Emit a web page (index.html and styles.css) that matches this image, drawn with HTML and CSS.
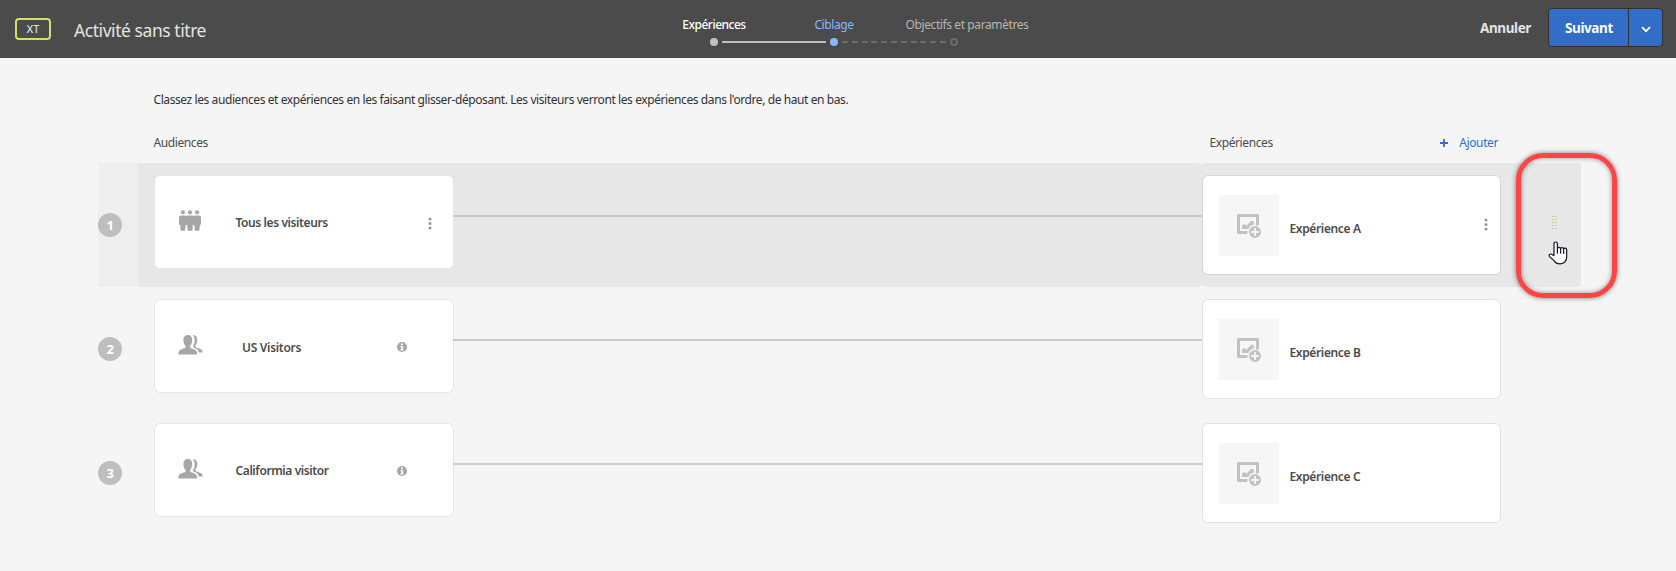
FILE: index.html
```html
<!DOCTYPE html>
<html lang="fr">
<head>
<meta charset="utf-8">
<title>Activité sans titre</title>
<link rel="stylesheet" href="styles.css">
</head>
<body>
<svg class="defs" width="0" height="0">
  <symbol id="crowd" viewBox="0 0 22 21">
    <circle cx="3.900" cy="2.300" r="2.100"/><circle cx="11" cy="2.300" r="2.100"/><circle cx="18.100" cy="2.300" r="2.100"/>
    <path d="M2 5.400H6L7.400 6 8.800 5.400H13.200L14.600 6 16 5.400H20Q22 5.400 22 7.400V13.500Q22 15 20.900 15L20.300 20.800H16L15.300 15H13.900L13.300 20.800H8.700L8.100 15H6.700L6 20.800H1.700L1.100 15Q0 15 0 13.500V7.400Q0 5.400 2 5.400Z"/>
  </symbol>
  <symbol id="people" viewBox="0 0 25 20">
    <path d="M9.800 0c2.900 0 4.400 2 4.400 5 0 2.600-.9 4.600-2 5.700-.5 1.800.2 2.300 1.800 2.900 3.700 1.200 5.200 2 5.200 5.900H.4c0-3.900 1.500-4.700 5.200-5.900 1.600-.6 2.300-1.100 1.800-2.900-1.100-1.100-2-3.100-2-5.700 0-3 1.500-5 4.400-5z"/>
    <path d="M14.600.2c3.200-.5 4.700 1.600 4.700 4.800 0 2.300-.7 4-1.800 5.100-.4 1.600.2 2.100 1.900 2.700 3.700 1.300 5.300 2 5.300 4.800h-3.800c-.7-2.800-2.200-3.900-5.600-5l-.2-1.800c1-1.200 1.600-3.500 1.600-5.900 0-2.100-.9-3.700-2.100-4.700z"/>
  </symbol>
  <symbol id="info" viewBox="0 0 10 10">
    <circle cx="5" cy="5" r="5"/><path fill="#fff" d="M4 1.500h2v1.600H4zM3.400 4h2.500v3.400h.7v1H3.400v-1h.8V5h-.8z"/>
  </symbol>
  <symbol id="more" viewBox="0 0 4 13">
    <circle cx="2" cy="2" r="1.500"/><circle cx="2" cy="6.500" r="1.500"/><circle cx="2" cy="11" r="1.500"/>
  </symbol>
  <symbol id="picture" viewBox="0 0 24 24">
    <path d="M1 0h20q1 0 1 1v10.500h-3V3H3v14h7.500v3H1q-1 0-1-1V1q0-1 1-1z"/>
    <path d="M5 15V11.500Q7.500 9 9.500 11.800L13.500 7.500Q15.500 5.500 16.500 7.500L17.200 10.500Q12.500 11 11.500 15Z"/>
    <path fill-rule="evenodd" d="M18 12a6 6 0 1 1 0 12 6 6 0 0 1 0-12zm-1 2.200V17h-2.800v2H17v2.800h2V19h2.800v-2H19v-2.800z"/>
  </symbol>
</svg>

<header class="topbar">
  <span class="type-badge">XT</span>
  <h1 class="title">Activité sans titre</h1>
  <ol class="steps">
    <li class="step step-done"><span>Expériences</span><i class="dot"></i></li>
    <li class="step step-current"><span>Ciblage</span><i class="dot"></i></li>
    <li class="step step-next"><span>Objectifs et paramètres</span><i class="dot"></i></li>
  </ol>
  <div class="actions">
    <span class="cancel">Annuler</span>
    <div class="split">
      <span class="split-main">Suivant</span>
      <span class="split-menu"><svg width="10" height="7" viewBox="0 0 10 7"><path d="M1 1.200l4 4 4-4" fill="none" stroke="#fff" stroke-width="1.700"/></svg></span>
    </div>
  </div>
</header>

<main class="main">
  <p class="intro">Classez les audiences et expériences en les faisant glisser-déposant. Les visiteurs verront les expériences dans l'ordre, de haut en bas.</p>
  <div class="heads">
    <span>Audiences</span>
    <span>Expériences</span>
    <span class="add"><svg width="8" height="8" viewBox="0 0 8 8"><path d="M4 0v8M0 4h8" stroke="#326ec8" stroke-width="1.800"/></svg>Ajouter</span>
  </div>

  <section class="row row-active">
    <div class="rank"><b>1</b></div>
    <div class="lane">
      <div class="card audience">
        <svg class="aud-icon crowd"><use href="#crowd"/></svg>
        <span class="name">Tous les visiteurs</span>
        <svg class="more"><use href="#more"/></svg>
      </div>
      <div class="link"></div>
    </div>
    <div class="target">
      <div class="card experience">
        <div class="thumb"><svg width="24" height="24"><use href="#picture"/></svg></div>
        <span class="exp-name">Expérience A</span>
        <svg class="more"><use href="#more"/></svg>
      </div>
      <div class="grip"><i></i><i></i></div>
    </div>
  </section>

  <section class="row">
    <div class="rank"><b>2</b></div>
    <div class="lane">
      <div class="card audience">
        <svg class="aud-icon"><use href="#people"/></svg>
        <span class="name name-indent">US Visitors</span>
        <svg class="info"><use href="#info"/></svg>
      </div>
      <div class="link"></div>
    </div>
    <div class="target">
      <div class="card experience">
        <div class="thumb"><svg width="24" height="24"><use href="#picture"/></svg></div>
        <span class="exp-name">Expérience B</span>
      </div>
    </div>
  </section>

  <section class="row">
    <div class="rank"><b>3</b></div>
    <div class="lane">
      <div class="card audience">
        <svg class="aud-icon"><use href="#people"/></svg>
        <span class="name">Califormia visitor</span>
        <svg class="info"><use href="#info"/></svg>
      </div>
      <div class="link"></div>
    </div>
    <div class="target">
      <div class="card experience">
        <div class="thumb"><svg width="24" height="24"><use href="#picture"/></svg></div>
        <span class="exp-name">Expérience C</span>
      </div>
    </div>
  </section>
</main>

<div class="callout"></div>
<svg class="cursor" width="20" height="26" viewBox="0 0 20 26"><path d="M6 14.500V3q0-2 1.700-2t1.700 2v4.500q0-1.100 1.500-1.100 1.600 0 1.700 1.300 0-1.100 1.500-1.100t1.600 1.500q.2-1 1.300-1 1.700 0 1.700 2v6.300q0 6.900-6.700 7.400-4.200 0-6-3.200L1.600 15.600q-.9-1.700.2-2.300 1.200-.7 2.400.3zM9.400 7.500v4.700M12.600 8v4.200M15.700 8.500v3.900" fill="#fff" stroke="#15152b" stroke-width="1.200" stroke-linejoin="round" stroke-linecap="round"/></svg>
</body>
</html>
```
FILE: styles.css
```css
* { box-sizing: border-box; }

body {
  margin: 0;
  height: 571px;
  overflow: hidden;
  background: #f5f5f5;
  color: #4b4b4b;
  font: 12px/18px "Noto Sans", "Open Sans", sans-serif;
  letter-spacing: -.4px;
  position: relative;
}

.defs { display: block; }

.topbar {
  display: flex;
  align-items: flex-start;
  height: 58px;
  background: #4b4b4b;
}

.type-badge {
  width: 36px;
  height: 22px;
  margin: 18px 0 0 15px;
  border: 2px solid #d3dd72;
  border-radius: 4px;
  color: #dcdcdc;
  font-size: 11px;
  font-weight: 500;
  letter-spacing: 0;
  line-height: 18px;
  text-align: center;
}

.title {
  width: 554px;
  margin: 18px 0 0 23px;
  color: #e3e3e3;
  font-size: 17.5px;
  font-weight: 400;
  letter-spacing: -.44px;
  line-height: 24px;
}

.steps {
  display: flex;
  width: 380px;
  margin: 16px 0 0 26px;
  padding: 0;
  list-style: none;
}

.step {
  position: relative;
  display: flex;
  flex: 0 0 120px;
  flex-direction: column;
  align-items: center;
  gap: 4px;
  min-width: 0;
  width: 120px;
  white-space: nowrap;
  color: #b5b5b5;
}

.step-done { color: #fff; font-weight: 500; letter-spacing: -.5px; }
.step-current { color: #86b9fb; }
.step-next span { margin-right: -26px; }

.dot {
  width: 8px;
  height: 8px;
  border-radius: 50%;
  background: #c0c0c0;
}

.step-current .dot { background: #86b9fb; }
.step-next .dot { border: 2px solid #6b6b6b; background: none; }

.step-done::after,
.step-current::after {
  content: "";
  position: absolute;
  left: 68px;
  top: 25px;
  width: 104px;
  height: 2px;
  background: #c0c0c0;
}

.step-current::after {
  background: repeating-linear-gradient(90deg, #6b6b6b 0 6px, transparent 6px 9.800px);
}

.actions {
  display: flex;
  margin: 8px 13px 0 auto;
  font-size: 13.5px;
  font-weight: 700;
}

.cancel {
  margin: 11px 17px 0 0;
  color: #e3e3e3;
}

.split {
  display: flex;
  width: 115px;
  height: 39px;
  border: 1px solid #303030;
  border-radius: 4px;
  background: #326ec8;
  color: #fff;
}

.split-main {
  width: 80px;
  padding: 10px 0 0 16px;
  border-right: 1px solid #303030;
}

.split-menu {
  display: flex;
  flex: 1;
  align-items: center;
  justify-content: center;
  padding-top: 3px;
}

.main { padding-left: 98px; }

.intro {
  margin: 0;
  padding: 33px 0 0 55.5px;
  color: #323232;
  letter-spacing: -.412px;
  white-space: nowrap;
}

.heads {
  display: grid;
  grid-template-columns: 1056px 1fr auto;
  width: 1400px;
  padding: 25px 0 11px 55.5px;
}

.add {
  display: flex;
  align-items: center;
  gap: 11px;
  color: #326ec8;
}

.row {
  display: grid;
  grid-template-columns: 40px 1064px 379px;
  height: 124px;
}

.rank { display: flex; align-items: center; }

.rank b {
  width: 24px;
  height: 24px;
  border-radius: 50%;
  background: #bebebe;
  color: #fff;
  font-size: 13px;
  line-height: 25px;
  text-align: center;
}

.row-active { width: 1483px; background: linear-gradient(90deg, #eee 0 60px, transparent 60px); }
.row-active .lane,
.row-active .target { border-radius: 4px; background: #e7e7e7; }

.lane { display: flex; padding: 12px 0 0 16px; }

.card {
  display: flex;
  border: 1px solid #e6e6e6;
  border-radius: 6px;
  background: #fff;
}

.audience { width: 300px; height: 94px; }
.aud-icon { width: 25px; height: 20px; margin: 35px 0 0 23px; fill: #a6a6a6; }
.crowd { width: 22px; height: 21px; margin: 34px 2px 0 24px; }
.name { width: max-content; margin: 38px auto 0 32.5px; font-weight: 600; white-space: nowrap; }
.name-indent { margin-top: 39px; margin-left: 39px; letter-spacing: -.3px; }
.more { width: 4px; height: 13px; margin: 41px 21px 0 0; fill: #969696; }
.info { width: 10px; height: 10px; margin: 42px 46px 0 0; fill: #a6a6a6; }

.link { flex: 1; height: 2px; margin: 40px 0 0 -1px; background: #cacaca; }

.target { display: flex; padding-top: 12px; }
.experience { width: 299px; height: 100px; border-color: #e1e1e1; }
.row-active .experience { border-color: #d5d5d5; }

.thumb {
  width: 60px;
  height: 61px;
  margin: 19px 10.5px 0 16px;
  padding: 19px 0 0 18px;
  background: #f6f6f6;
  fill: #c2c2c2;
  line-height: 0;
}

.exp-name { margin: 44px auto 0 0; font-weight: 600; letter-spacing: -.36px; }
.experience .more { margin: 42px 12px 0 0; }

.grip { display: flex; gap: 1px; margin: 41px 0 0 51px; }
.grip i {
  width: 2px;
  height: 13px;
  background: repeating-linear-gradient(#d6c48c 0 1px, transparent 1px 3px);
}
.grip i + i { background: repeating-linear-gradient(#c8ccb8 0 1px, transparent 1px 3px); }

.callout {
  position: absolute;
  left: 1516px;
  top: 153px;
  width: 101px;
  height: 145px;
  border: 5px solid #fd4545;
  border-radius: 27px;
  box-shadow: 0 0 5px rgba(0, 0, 0, .5), inset 0 0 5px rgba(0, 0, 0, .4);
}

.cursor { position: absolute; left: 1548px; top: 241px; }
```
